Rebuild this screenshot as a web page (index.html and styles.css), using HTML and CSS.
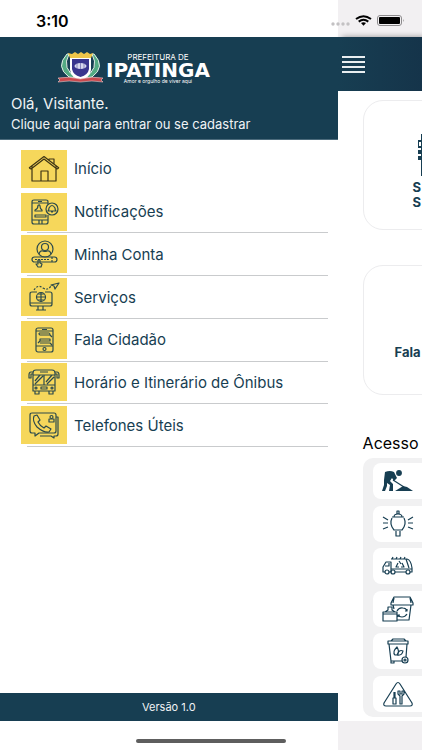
FILE: index.html
```
<!DOCTYPE html>
<html lang="pt-BR">

<head>
    <meta charset="UTF-8">
    <meta name="viewport" content="width=device-width, initial-scale=1.0">
    <title>Prefeitura de Ipatinga</title>
    <link rel="stylesheet" href="styles.css">
</head>

<body>
    <!-- Status bar -->
    <div class="status-bar">
        <span class="time">3:10</span>
        <div class="status-icons">
            <svg width="20" height="4" viewBox="0 0 20 4" fill="#c3c1c3">
                <circle cx="2" cy="2" r="1.7" /><circle cx="7" cy="2" r="1.7" /><circle cx="12" cy="2" r="1.7" /><circle cx="17" cy="2" r="1.7" />
            </svg>
            <svg class="wifi" width="17" height="11" viewBox="0 0 17 11" fill="none" stroke="#000" stroke-width="2">
                <path d="M1 4 Q8.500 -1.500 16 4" /><path d="M3.700 6.600 Q8.500 3 13.300 6.600" /><path d="M6 8 Q8.500 6.600 11 8 L8.500 10.700Z" fill="#000" stroke="none" />
            </svg>
            <svg width="28" height="11" viewBox="0 0 28 11">
                <rect x="0.500" y="0.500" width="24" height="10" rx="2.500" fill="none" stroke="#8d8b8d" />
                <rect x="2" y="2" width="21" height="7" rx="1" /><path d="M26 4 Q27.500 5.500 26 7Z" fill="#8d8b8d" />
            </svg>
        </div>
    </div>

    <div class="app">
        <!-- Side menu -->
        <aside class="drawer">
            <header class="drawer-header">
                <div class="logo">
                    <svg width="47" height="31" viewBox="0 0 47 31">
                        <path d="M10 2 Q-2 15 12 25 L20 26 Q4 17 12 2Z M37 2 Q49 15 35 25 L27 26 Q43 17 35 2Z" fill="#53aa83" stroke="#e4f0e8" stroke-width="1" />
                        <path d="M13 5 H34 V18 Q33 26 23.500 28 Q14 26 13 18Z" fill="#fff" />
                        <path d="M15 7 H32 V17 Q31 23 23.500 25 Q16 23 15 17Z" fill="#39358d" />
                        <path d="M11 1 L15 2 L18 0 L21 2 L24 0 L27 2 L30 0 L33 2 L36 1 L34 6 H13Z" fill="#efc64a" />
                        <ellipse cx="23.500" cy="14" rx="6" ry="3" fill="#d7d8ed" />
                        <path d="M20 11 V17 M23.500 11 V17 M27 11 V17" stroke="#6765a8" stroke-width="0.700" />
                        <path d="M1 26 Q12 24 23.500 27 Q35 24 46 26 L44 28 L46 30 Q35 28 23.500 30 Q12 28 1 30 L3 28Z" fill="#c9494e" stroke="#f0c9c9" stroke-width="0.600" />
                    </svg>
                    <div class="logo-text">
                        <span class="logo-top">PREFEITURA DE</span>
                        <strong class="logo-name">IPATINGA</strong>
                        <span class="logo-slogan">Amor e orgulho de viver aqui</span>
                    </div>
                </div>
                <p class="hello">Olá, Visitante.</p>
                <a class="login" href="#">Clique aqui para entrar ou se cadastrar</a>
            </header>

            <nav class="menu">
                <a class="menu-item" href="#">
                    <span class="menu-icon">
                        <svg width="32" height="28" viewBox="0 0 32 28">
                            <path d="M4 11 V26 H28 V11 M1 13 L16 1.500 L31 13 M1 13 L3 14 L16 4 L29 14 L31 13 M21 5 V4 H26 V9 M13 26 V16 H20 V26" />
                        </svg>
                    </span>
                    Início
                </a>
                <a class="menu-item" href="#">
                    <span class="menu-icon">
                        <svg width="32" height="28" viewBox="0 0 32 28">
                            <path d="M20 6 V4 Q20 2 18 2 H6 Q4 2 4 4 V24 Q4 26 6 26 H18 Q20 26 20 24 V17 M4 5 H20 M4 22 H20 M11 22 V26 H14 V22 M10 3.500 H14 M7 13 V12 Q10 11 10 7.500 Q11.500 6 12 8 Q12 11 14 12 V13Z M7 17 H18 V19 H7Z" />
                            <circle cx="24" cy="11" r="6" /><path d="M20 13 Q21 12 21 10 Q24 5 27 10 Q27 12 28 13Z M23 14 H25" />
                        </svg>
                    </span>
                    Notificações
                </a>
                <a class="menu-item" href="#">
                    <span class="menu-icon">
                        <svg width="32" height="28" viewBox="0 0 32 28">
                            <circle cx="17" cy="9" r="8" /><circle cx="17" cy="7" r="3.500" /><path d="M11 14 Q12 10 15 11 Q17 12 19 11 Q22 10 23 14" />
                            <rect x="4" y="17" width="25" height="5" rx="2.500" /><path d="M24 17 V22 M7 19.500 H21" stroke-dasharray="2 1" /><path d="M10 27 L8 24 H10 V20 H12 V23 L14 24 L13 27Z" />
                        </svg>
                    </span>
                    Minha Conta
                </a>
                <a class="menu-item" href="#">
                    <span class="menu-icon">
                        <svg width="32" height="30" viewBox="0 0 32 30">
                            <path d="M9 10 H4 Q2 10 2 12 V22 Q2 24 4 24 H22 Q24 24 24 22 V12 Q24 10 22 10 H17 M2 21 H24 M10 24 V28 M15 24 V28 M8 28 H18" />
                            <circle cx="13" cy="15" r="4.500" /><path d="M13 10 V20 M8.500 15 H17.500 M10 12 H16 M10 18 H16" />
                            <path d="M6 8 Q10 2 15 6 Q20 9 23 4" stroke-dasharray="2 1.500" /><path d="M23 3 L31 1 L27 7 L26 4Z" />
                        </svg>
                    </span>
                    Serviços
                </a>
                <a class="menu-item" href="#">
                    <span class="menu-icon">
                        <svg width="32" height="28" viewBox="0 0 32 28">
                            <rect x="8" y="2" width="17" height="24" rx="2" /><path d="M8 5 H25 M8 20 H25 M14 3.500 H19 M11 7 H21 Q22 7 22 9 H12 Q11 9 11 7 M22 9 L24 11 M12 13 H22 V15 H12Z M12 15 L10 17 M12 17 H22 L24 19" /><circle cx="16.500" cy="23" r="1.500" />
                        </svg>
                    </span>
                    Fala Cidadão
                </a>
                <a class="menu-item" href="#">
                    <span class="menu-icon">
                        <svg width="32" height="28" viewBox="0 0 32 28">
                            <path d="M5 23 V5 Q5 2 8 2 H24 Q27 2 27 5 V23Z M5 4 H3 Q1 4 1 7 V10 H3 V6 H5 M27 4 H29 Q31 4 31 7 V10 H29 V6 H27 M5 7 H27 M5 17 H27 M16 7 V17 M7 13 L12 7 M7 16 L15 8 M18 14 L24 7 M19 16 L26 9 M12 4 H20 M7 23 V26 H11 V23 M21 23 V26 H25 V23 M13 19 H19 V21 H13Z" /><circle cx="8" cy="20" r="1" /><circle cx="24" cy="20" r="1" />
                        </svg>
                    </span>
                    Horário e Itinerário de Ônibus
                </a>
                <a class="menu-item" href="#">
                    <span class="menu-icon">
                        <svg width="32" height="28" viewBox="0 0 32 28">
                            <path d="M4 2 H26 Q28 2 28 4 V20 Q28 22 26 22 H11 L7 25 V22 H4 Q2 22 2 20 V4 Q2 2 4 2Z M28 6 H30 V23 Q30 25 28 25 H26 V27 L23 25 H12" />
                            <path d="M6 5 L9 4 L12 9 L10 11 Q12 15 16 17 L18 15 L23 18 L21 21 Q16 22 9 16 Q4 10 6 5Z M21 11 V8 H26 V11Z" /><circle cx="23.500" cy="6" r="1.500" />
                        </svg>
                    </span>
                    Telefones Úteis
                </a>
            </nav>

            <footer class="version">Versão 1.0</footer>
        </aside>

        <!-- Home page behind the menu -->
        <main class="page">
            <div class="navbar">
                <button class="menu-button" aria-label="Menu">
                    <span></span><span></span><span></span><span></span>
                </button>
            </div>
            <div class="page-content">
                <a class="card card-services" href="#">
                    <svg width="28" height="42" viewBox="0 0 28 42">
                        <path d="M3 0 H28 V42 H3 V26 H0 V22 H3 V20 H0 V16 H3 V14 H0 V6 H3Z" fill="#173e52" /><path d="M1 8 H3 V12 H1Z" fill="#fff" />
                    </svg>
                    <span>S<br>S</span>
                </a>
                <a class="card card-talk" href="#">Fala</a>

                <h2>Acesso</h2>
                <div class="shortcuts">
                    <a class="shortcut" href="#" aria-label="Obras">
                        <svg width="32" height="26" viewBox="0 0 32 26">
                            <circle cx="17" cy="5" r="2.300" fill="#173e52" /><path d="M3 4 Q8 2 12 4 L15 10 L12 13 L10 10 L8 13 L11 16 L11 23 H7 L8 17 L5 15 L5 18 L3 23 H0 L2 17 L2 12Z M13 23 L18 20 L21 18 L25 19 L31 23Z" fill="#173e52" stroke="none" /><path d="M11 12 L22 19" />
                        </svg>
                    </a>
                    <a class="shortcut" href="#" aria-label="Iluminação">
                        <svg width="32" height="28" viewBox="0 0 32 28">
                            <path d="M15 4 V1 H17 V4 M12 7 Q12 4 16 4 Q20 4 20 7Z M10 7 H22 M10 8 Q7 14 12 20 H20 Q25 14 22 8 M12 20 H20 M14 21 V26 H18 V21 M1 7 L6 10 M1 13 H6 M1 19 L6 17 M31 7 L26 10 M31 13 H26 M31 19 L26 17" />
                        </svg>
                    </a>
                    <a class="shortcut" href="#" aria-label="Coleta de lixo">
                        <svg width="32" height="20" viewBox="0 0 32 20">
                            <path d="M3 16 H1 V11 L4 6 H9 V16 H7 M3 10 H7 V7 M9 3 H25 Q29 4 30 12 V16 H28 M24 16 H13 M9 13 H30 M10 3 L11 1 M14 3 L15 1 M18 3 L19 1 M22 3 L23 1 M24 3 L27 12 M17 5 L19 8 M16 7 L14 11 H17 M19 11 H22 L20 7" /><circle cx="5" cy="16" r="2" /><circle cx="11" cy="16" r="2" /><circle cx="26" cy="16" r="2" />
                        </svg>
                    </a>
                    <a class="shortcut" href="#" aria-label="Descarte">
                        <svg width="32" height="28" viewBox="0 0 32 28">
                            <path d="M12 2 H28 L31 8 V10 H9 V8Z M12 3 L11 8 M28 3 L29 8 M11 10 L12 14 M29 10 L27 25 H15 M1 17 H15 V26 H1Z M1 19 H15 M3 17 L6 15 V12 H10 V15 L13 17 M15 16 Q17 12 21 13 Q24 13 25 16 M25 19 Q23 22 20 22 Q17 22 16 20 M25 14 V16 H23 M16 22 V20 H18" />
                        </svg>
                    </a>
                    <a class="shortcut" href="#" aria-label="Coleta seletiva">
                        <svg width="32" height="28" viewBox="0 0 32 28">
                            <path d="M6 4 H26 V7 H6Z M9 4 L11 2 H22 L24 4 M7 7 L9 24 H20 M25 7 L24 20 M9 24 V26 H12 V24 M13 18 Q10 15 15 10 Q18 15 15 18Z M15 18 Q17 12 21 14 Q20 19 15 18Z" /><circle cx="23" cy="23" r="3" /><circle cx="23" cy="23" r="1" />
                        </svg>
                    </a>
                    <a class="shortcut" href="#" aria-label="Manutenção">
                        <svg width="32" height="28" viewBox="0 0 32 28">
                            <path d="M14 4 Q16 1 18 4 L30 23 Q31 26 28 26 H4 Q1 26 2 23Z M12 12 V18 M11 18 H14 V24 H11Z M13 12 V18 M16 11 V14 L18 16 V24 H20 V16 L22 14 V11 L20 11 V14 H18 V11Z" />
                        </svg>
                    </a>
                </div>
            </div>
        </main>
    </div>

    <div class="home-area">
        <div class="home-indicator"></div>
    </div>
</body>

</html>
```
FILE: styles.css
```
* {
    box-sizing: border-box;
}

body {
    display: flex;
    flex-direction: column;
    min-height: 100vh;
    margin: 0;
    font-family: Inter, "Liberation Sans", sans-serif;
    color: #173e52;
    background: #fff;
    overflow-x: hidden;
}

a {
    color: inherit;
    text-decoration: none;
}

/* Phone bars, split where the drawer ends */
.status-bar,
.home-area {
    background: linear-gradient(to right, #fff 80%, #f2f0f2 80%);
}

.status-bar {
    display: flex;
    justify-content: space-between;
    align-items: center;
    height: 37px;
    padding: 4px 17px 0 36px;
}

.time {
    font-size: 16px;
    font-weight: 600;
    color: #000;
}

.status-icons {
    display: flex;
    align-items: center;
    gap: 4px;
}

.status-icons svg:first-child {
    margin-top: 7px;
}

.wifi {
    margin-right: 1px;
}

.app {
    display: flex;
    flex: 1;
}

/* Side menu */
.drawer {
    position: relative;
    display: flex;
    flex-direction: column;
    flex: 0 0 80%;
    background: #fff;
}

.drawer-header {
    height: 103px;
    padding: 15px 11px 0;
    color: #f0f3f5;
    background: #173e52;
    border-bottom: 1px solid #4c6b7c;
}

.logo {
    display: flex;
    gap: 2px;
    height: 31px;
    padding-left: 46px;
}

.logo-text {
    display: flex;
    flex-direction: column;
    align-items: center;
    color: #fff;
}

.logo-top {
    font-size: 8px;
    line-height: 10px;
}

.logo-name {
    font-family: "DejaVu Sans", sans-serif;
    font-size: 20px;
    font-weight: 700;
    line-height: 16px;
}

.logo-slogan {
    font-size: 5px;
    line-height: 6px;
}

.hello {
    margin: 12px 0 3px;
    font-size: 15px;
    line-height: 18px;
}

.login {
    display: block;
    font-size: 13px;
    line-height: 16px;
}

.menu {
    display: flex;
    flex-direction: column;
    height: 299px;
    margin: 8px 10px 0 27px;
}

.menu-item {
    display: flex;
    flex: 1;
    align-items: center;
    gap: 7px;
    font-size: 15px;
    border-bottom: 1px solid #c9cbcd;
}

.menu-item:first-child {
    border-bottom-color: transparent;
}

.menu-icon {
    display: flex;
    align-items: center;
    justify-content: center;
    width: 46px;
    height: 38px;
    margin-left: -6px;
    background: #f6d75b;
}

.menu-icon svg,
.shortcut svg {
    fill: none;
    stroke: #2c4a4c;
    stroke-width: 1.2;
    stroke-linejoin: round;
}

.menu-item:first-child svg {
    stroke: #3e3515;
}

.shortcut svg {
    stroke: #173e52;
}

.version {
    margin-top: auto;
    font-size: 11px;
    line-height: 28px;
    text-align: center;
    color: #f0f3f5;
    background: #173e52;
}

/* Home page */
.page {
    flex: 1;
    min-width: 0;
}

.navbar {
    display: flex;
    align-items: center;
    height: 54px;
    padding-left: 4px;
    background: linear-gradient(to right, #173e52, #15344a);
    box-shadow: 4px 0 6px rgba(0, 0, 0, 0.4);
}

.menu-button {
    display: flex;
    flex-direction: column;
    gap: 3px;
    padding: 0;
    border: none;
    background: none;
}

.menu-button span {
    width: 23px;
    height: 2px;
    background: #e9eef0;
}

.page-content {
    position: relative;
    padding: 9px 0 4px 25px;
    overflow: hidden;
    background: #fff;
}

.card {
    display: flex;
    width: 152px;
    height: 130px;
    margin-bottom: 35px;
    font-size: 13px;
    font-weight: 700;
    line-height: 15px;
    border: 1px solid #ececee;
    border-radius: 20px;
}

.card-services {
    flex-direction: column;
    gap: 4px;
    padding: 33px 0 0 49px;
}

.card-services svg {
    margin-left: 5px;
}

.card-talk {
    padding: 79px 0 0 31px;
}

h2 {
    margin: 38px 0 5px;
    font-size: 16px;
    font-weight: 400;
    line-height: 20px;
    color: #000;
}

.shortcuts {
    display: flex;
    flex-direction: column;
    justify-content: space-between;
    width: 320px;
    height: 259px;
    padding: 5px 10px;
    background: #f1f1f2;
    border-radius: 10px;
}

.shortcut {
    display: flex;
    align-items: center;
    height: 36px;
    padding-left: 9px;
    background: #fff;
    border-radius: 8px;
}

.home-area {
    height: 29px;
    padding-top: 18px;
}

.home-indicator {
    width: 150px;
    height: 4px;
    margin: 0 auto;
    border-radius: 2px;
    background: #5e5e5e;
}
```
